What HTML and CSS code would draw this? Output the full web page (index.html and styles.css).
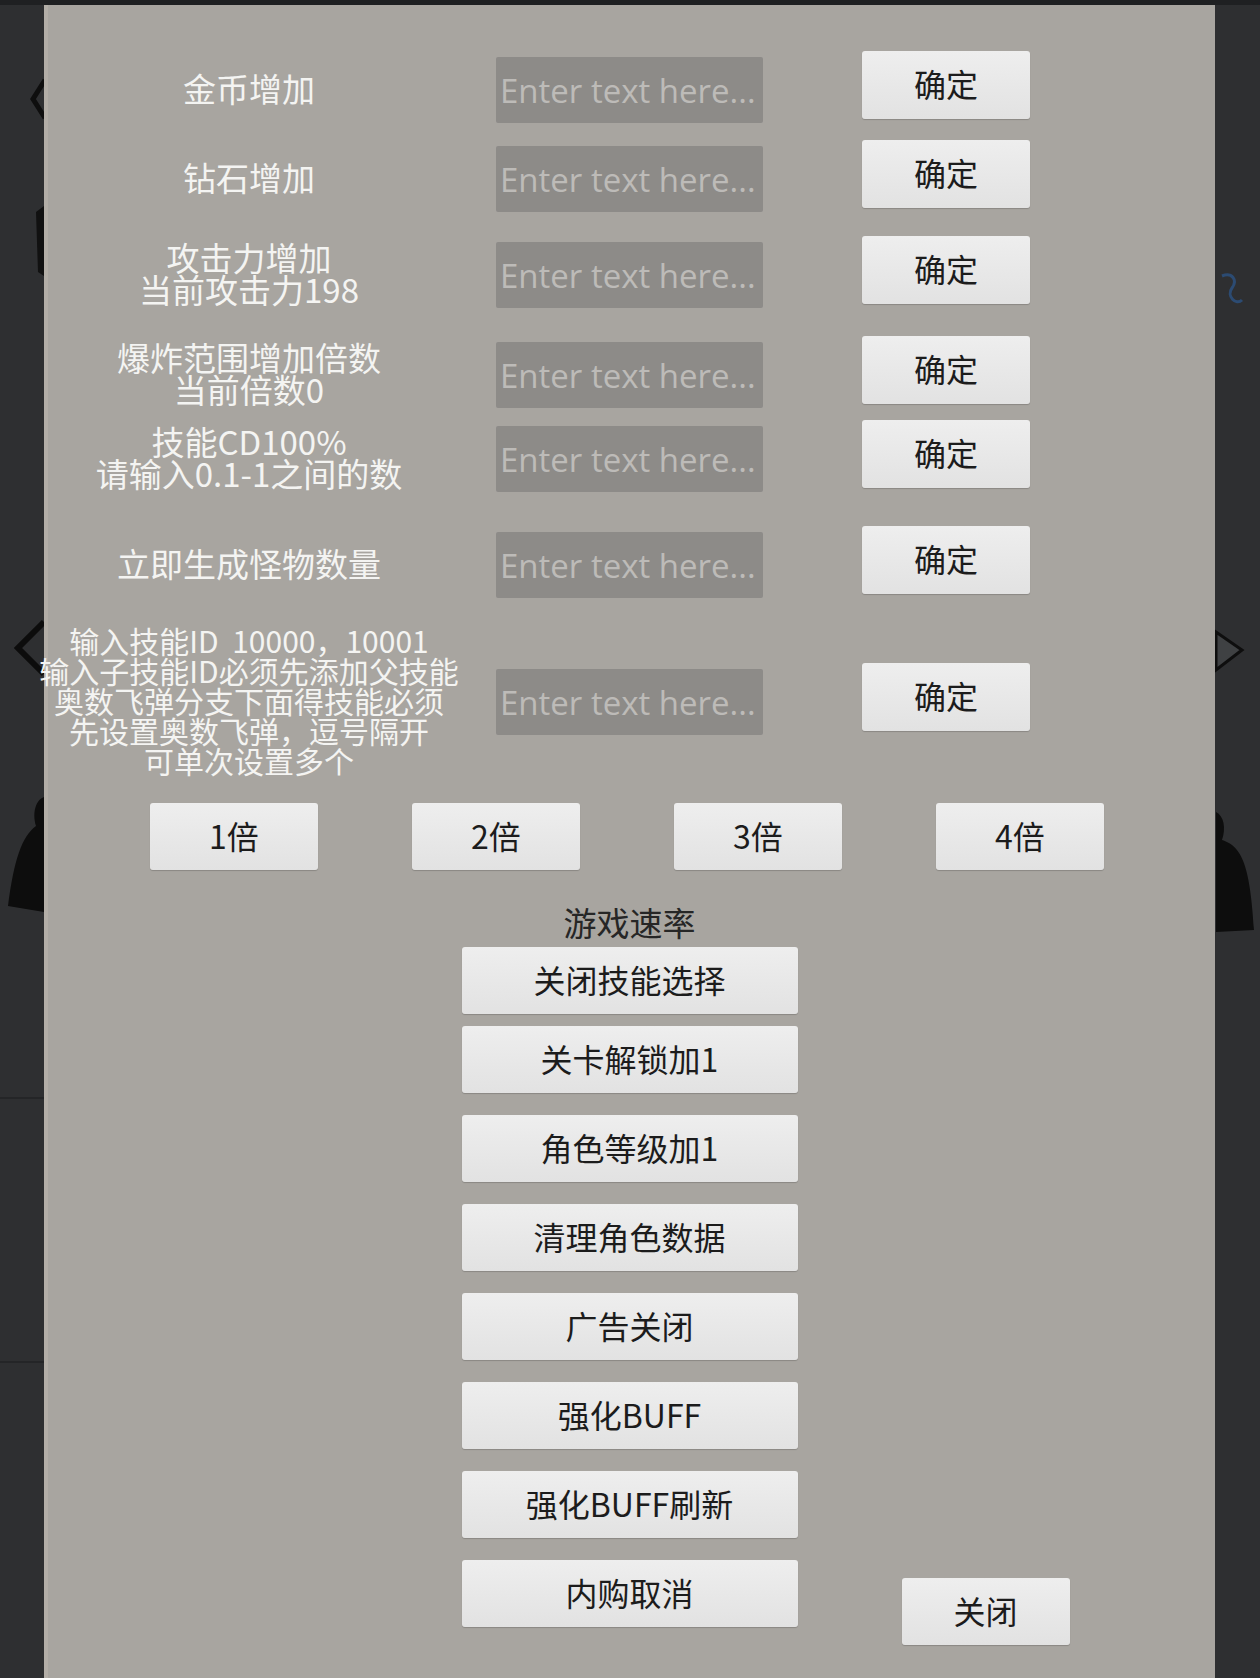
FILE: index.html
```html
<!DOCTYPE html>
<html lang="zh-CN">
<head>
    <meta charset="UTF-8">
    <title>修改菜单</title>
    <link rel="stylesheet" href="styles.css">
</head>
<body>
    <!-- game scene peeking out behind the menu -->
    <svg class="scene" width="1260" height="1678" viewBox="0 0 1260 1678">
        <rect x="0" y="0" width="1260" height="5" fill="#1f2022"/>
        <polyline points="45,80 33,99 45,118" fill="none" stroke="#0e0e0e" stroke-width="5"/>
        <path d="M36 212 L44 206 L44 276 L38 272 Z" fill="#111"/>
        <polyline points="44,622 18,648 44,674" fill="none" stroke="#0c0c0c" stroke-width="6"/>
        <path d="M44 797 C36 800 32 812 36 826 C22 836 14 860 8 906 L44 912 Z" fill="#0d0d0d"/>
        <line x1="0" y1="1098" x2="44" y2="1098" stroke="#242527" stroke-width="2"/>
        <line x1="0" y1="1362" x2="44" y2="1362" stroke="#242527" stroke-width="2"/>
        <path d="M1222 276 C1232 272 1238 280 1232 288 C1226 296 1236 306 1242 300" fill="none" stroke="#2c4b72" stroke-width="3"/>
        <polygon points="1216,632 1242,650 1216,670" fill="#3f4143" stroke="#0e0e0e" stroke-width="3"/>
        <path d="M1216 812 C1224 816 1226 828 1222 840 C1240 846 1250 860 1254 930 L1216 932 Z" fill="#0d0d0d"/>
    </svg>

    <div class="panel">
        <div class="row">
            <div class="label"><span>金币增加</span></div>
            <input class="field" type="text" placeholder="Enter text here...">
            <button class="btn btn-ok">确定</button>
        </div>

        <div class="row mt-11">
            <div class="label"><span>钻石增加</span></div>
            <input class="field" type="text" placeholder="Enter text here...">
            <button class="btn btn-ok">确定</button>
        </div>

        <div class="row mt-18">
            <div class="label"><span>攻击力增加</span><span>当前攻击力198</span></div>
            <input class="field" type="text" placeholder="Enter text here...">
            <button class="btn btn-ok">确定</button>
        </div>

        <div class="row mt-22">
            <div class="label"><span>爆炸范围增加倍数</span><span>当前倍数0</span></div>
            <input class="field" type="text" placeholder="Enter text here...">
            <button class="btn btn-ok">确定</button>
        </div>

        <div class="row mt-6">
            <div class="label"><span>技能CD100%</span><span>请输入0.1-1之间的数</span></div>
            <input class="field" type="text" placeholder="Enter text here...">
            <button class="btn btn-ok">确定</button>
        </div>

        <div class="row mt-28">
            <div class="label"><span>立即生成怪物数量</span></div>
            <input class="field" type="text" placeholder="Enter text here...">
            <button class="btn btn-ok">确定</button>
        </div>

        <div class="row mt-21">
            <div class="label label-small">
                <span>输入技能ID&nbsp;&nbsp;10000，10001</span>
                <span>输入子技能ID必须先添加父技能</span>
                <span>奥数飞弹分支下面得技能必须</span>
                <span>先设置奥数飞弹，逗号隔开</span>
                <span>可单次设置多个</span>
            </div>
            <input class="field" type="text" placeholder="Enter text here...">
            <button class="btn btn-ok">确定</button>
        </div>

        <div class="speed-row">
            <button class="btn btn-speed">1倍</button>
            <button class="btn btn-speed">2倍</button>
            <button class="btn btn-speed">3倍</button>
            <button class="btn btn-speed">4倍</button>
        </div>

        <div class="speed-title">游戏速率</div>

        <div class="actions">
            <button class="btn btn-wide first">关闭技能选择</button>
            <button class="btn btn-wide second">关卡解锁加1</button>
            <button class="btn btn-wide">角色等级加1</button>
            <button class="btn btn-wide">清理角色数据</button>
            <button class="btn btn-wide">广告关闭</button>
            <button class="btn btn-wide">强化BUFF</button>
            <button class="btn btn-wide">强化BUFF刷新</button>
            <div class="last-row">
                <button class="btn btn-wide">内购取消</button>
                <button class="btn btn-close">关闭</button>
            </div>
        </div>
    </div>
</body>
</html>
```

FILE: styles.css
```css
body {
    margin: 0;
    padding: 0;
    width: 1260px;
    height: 1678px;
    overflow: hidden;
    position: relative;
    background: #2e2f31;
    font-family: "Noto Sans CJK SC", "Noto Sans", sans-serif;
}

.scene {
    position: absolute;
    left: 0;
    top: 0;
}

.panel {
    position: relative;
    margin: 5px 0 0 44px;
    width: 1171px;
    height: 1673px;
    box-sizing: border-box;
    padding-top: 46px;
    background: #a8a5a0;
    border-left: 4px solid #b3aea7;
}

.row {
    display: flex;
    align-items: center;
    margin-left: -4px;
}

.mt-6 { margin-top: 6px; }
.mt-11 { margin-top: 11px; }
.mt-18 { margin-top: 18px; }
.mt-21 { margin-top: 21px; }
.mt-22 { margin-top: 22px; }
.mt-28 { margin-top: 28px; }

.label {
    width: 410px;
    flex-shrink: 0;
    display: flex;
    flex-direction: column;
    align-items: center;
    padding-bottom: 4px;
    color: #f4f4f2;
    font-size: 33px;
    line-height: 32px;
}

.label span {
    display: block;
    height: 32px;
    white-space: nowrap;
}

.label-small {
    font-size: 30px;
    line-height: 30px;
}

.label-small span {
    height: 30px;
}

.field {
    width: 267px;
    height: 66px;
    margin-left: 42px;
    padding: 0 0 0 4px;
    box-sizing: border-box;
    border: none;
    border-radius: 2px;
    outline: none;
    background: #8d8b88;
    color: #eee;
    font-family: "Open Sans", Roboto, sans-serif;
    font-size: 33px;
}

.field::placeholder {
    color: #bdbbb8;
}

.btn {
    height: 67px;
    border: none;
    border-radius: 3px;
    background: linear-gradient(#eeeeee, #e2e2e2);
    box-shadow: 0 1px 1px rgba(0, 0, 0, 0.18);
    color: #1c1c1c;
    font-family: "Noto Sans CJK SC", "Noto Sans", sans-serif;
    font-size: 32px;
    line-height: 40px;
    padding: 0 0 4px;
}

.btn-ok {
    width: 168px;
    height: 68px;
    margin-left: 99px;
    margin-bottom: 10px;
}

.speed-row {
    display: flex;
    gap: 94px;
    margin-top: 24px;
    padding-left: 102px;
}

.btn-speed {
    width: 168px;
}

.speed-title {
    margin-top: 36px;
    margin-bottom: 2px;
    text-align: center;
    color: #262626;
    font-size: 33px;
    line-height: 32px;
    margin-left: -4px;
}

.actions {
    display: flex;
    flex-direction: column;
    align-items: center;
    gap: 22px;
    margin-left: -4px;
}

.btn-wide {
    width: 336px;
}

.actions .first {
    margin-top: 7px;
}

.actions .second {
    margin-top: -10px;
}

.last-row {
    display: grid;
    grid-template-columns: 1fr 336px 1fr;
    width: 100%;
    align-items: start;
}

.last-row .btn-wide {
    grid-column: 2;
}

.btn-close {
    grid-column: 3;
    width: 168px;
    margin: 18px 0 0 104px;
}
```
